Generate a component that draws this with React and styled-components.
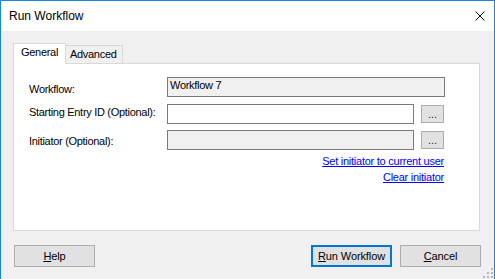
import React from 'react';
import styled, { createGlobalStyle } from 'styled-components';

const Global = createGlobalStyle`
  html, body { margin: 0; padding: 0; background: #ffffff; }
  body { font-family: "Liberation Sans", Arial, sans-serif; color: #000; }
  * { box-sizing: border-box; }
`;

const Window = styled.div`
  position: relative;
  width: 495px;
  height: 279px;
  border: 1px solid #1a86d8;
  border-bottom: none;
  background: #f0f0f0;
  display: flex;
  flex-direction: column;
  overflow: hidden;
`;

const TitleBar = styled.div`
  flex: none;
  height: 30px;
  background: #ffffff;
  display: flex;
  align-items: center;
  justify-content: space-between;
  padding: 0 9px 0 8px;
`;

const Title = styled.span`
  font-size: 12px;
  line-height: 16px;
`;

const Body = styled.div`
  flex: 1;
  padding: 12px 13px 0 12px;
  display: flex;
  flex-direction: column;
`;

const TabStrip = styled.div`
  display: flex;
  align-items: flex-end;
  height: 20px;
`;

const Tab = styled.div`
  position: relative;
  z-index: ${p => (p.$active ? 1 : 0)};
  width: ${p => p.$w}px;
  height: ${p => (p.$active ? 21 : 18)}px;
  margin-bottom: ${p => (p.$active ? -1 : 0)}px;
  background: ${p => (p.$active ? '#ffffff' : '#f0f0f0')};
  border: 1px solid #d9d9d9;
  border-bottom: none;
  border-left: ${p => (p.$active ? '1px solid #d9d9d9' : 'none')};
  padding: 2px 0 0 ${p => p.$pl}px;
  font-size: 11px;
  line-height: 13px;
  letter-spacing: -0.3px;
  white-space: nowrap;
`;

const Panel = styled.div`
  width: 467px;
  height: 168px;
  background: #ffffff;
  border: 1px solid #d9d9d9;
  padding: 13px 0 0 15px;
`;

const Row = styled.div`
  display: flex;
  align-items: flex-start;
  height: 20px;
  margin-top: ${p => p.$mt || 0}px;
`;

const Label = styled.div`
  width: 138px;
  flex: none;
  margin-top: ${p => p.$mt || 0}px;
  font-size: 11px;
  line-height: 13px;
  letter-spacing: -0.3px;
  white-space: nowrap;
`;

const Field = styled.div`
  width: ${p => p.$w}px;
  height: 20px;
  flex: none;
  border: 1px solid #7a7a7a;
  background: ${p => (p.$grey ? '#f0f0f0' : '#ffffff')};
  padding: 1px 2px;
  font-size: 11px;
  line-height: 13px;
  letter-spacing: -0.3px;
  white-space: nowrap;
`;

const Browse = styled.div`
  width: 23px;
  height: 18px;
  flex: none;
  align-self: center;
  margin-left: 7px;
  border: 1px solid #adadad;
  background: #e1e1e1;
  display: flex;
  align-items: center;
  justify-content: center;
  font-size: 11px;
  line-height: 13px;
  padding-top: 1px;
  color: #1a1a2e;
`;

const Links = styled.div`
  width: 415px;
  margin-top: 3px;
  display: flex;
  flex-direction: column;
  align-items: flex-end;
`;

const Link = styled.a`
  color: #0000ff;
  text-decoration: underline;
  font-size: 11px;
  line-height: 16px;
  letter-spacing: -0.25px;
  white-space: nowrap;
  cursor: pointer;
`;

const Footer = styled.div`
  display: flex;
  justify-content: space-between;
  margin-top: 14px;
  padding-left: 1px;
`;

const ButtonGroup = styled.div`
  display: flex;
  gap: 8px;
`;

const Button = styled.div`
  width: 81px;
  height: 22px;
  border: ${p => (p.$default ? '2px solid #0078d7' : '1px solid #adadad')};
  background: #e1e1e1;
  display: flex;
  align-items: center;
  justify-content: center;
  font-size: 11px;
  line-height: 13px;
  letter-spacing: -0.1px;
  white-space: nowrap;
  u { text-decoration: underline; }
`;

const Grip = styled.svg`
  position: absolute;
  right: 1px;
  bottom: 1px;
`;

const CloseIcon = () => (
  <svg width="10" height="10" viewBox="0 0 10 10">
    <path d="M0.5 0.5 L9.5 9.5 M9.5 0.5 L0.5 9.5" stroke="#000" strokeWidth="1" fill="none" />
  </svg>
);

export default function App() {
  const dots = [];
  for (let r = 0; r < 3; r++) {
    for (let c = 2 - r; c < 3; c++) {
      dots.push(<rect key={`${r}-${c}`} x={c * 4} y={r * 4} width="2" height="2" fill="#b9b9b9" />);
    }
  }
  return (
    <>
      <Global />
      <Window>
        <TitleBar>
          <Title>Run Workflow</Title>
          <CloseIcon />
        </TitleBar>
        <Body>
          <TabStrip>
            <Tab $active $w={53} $pl={7}>General</Tab>
            <Tab $w={57} $pl={4}>Advanced</Tab>
          </TabStrip>
          <Panel>
            <Row>
              <Label $mt={6}>Workflow:</Label>
              <Field $w={278} $grey>Workflow 7</Field>
            </Row>
            <Row $mt={7}>
              <Label $mt={2}>Starting Entry ID (Optional):</Label>
              <Field $w={247} />
              <Browse>...</Browse>
            </Row>
            <Row $mt={6}>
              <Label $mt={5}>Initiator (Optional):</Label>
              <Field $w={247} $grey />
              <Browse>...</Browse>
            </Row>
            <Links>
              <Link>Set initiator to current user</Link>
              <Link>Clear initiator</Link>
            </Links>
          </Panel>
          <Footer>
            <Button><span><u>H</u>elp</span></Button>
            <ButtonGroup>
              <Button $default><span><u>R</u>un Workflow</span></Button>
              <Button><span><u>C</u>ancel</span></Button>
            </ButtonGroup>
          </Footer>
        </Body>
        <Grip width="10" height="10" viewBox="0 0 10 10">{dots}</Grip>
      </Window>
    </>
  );
}
